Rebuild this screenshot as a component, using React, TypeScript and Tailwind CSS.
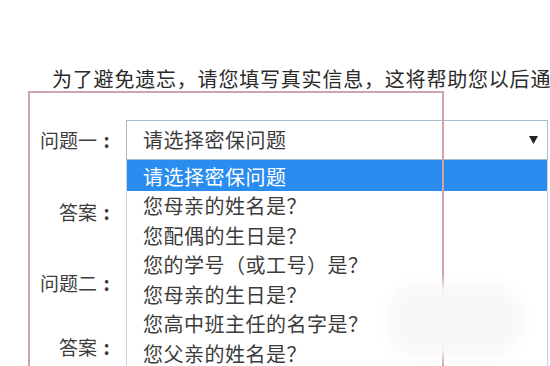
import React from 'react';

const OPTIONS: string[] = [
    '请选择密保问题',
    '您母亲的姓名是？',
    '您配偶的生日是？',
    '您的学号（或工号）是？',
    '您母亲的生日是？',
    '您高中班主任的名字是？',
    '您父亲的姓名是？',
    '您父亲的生日是？',
];

const FONT = "font-['Noto_Sans_CJK_SC','Noto_Sans',sans-serif]";

const Label: React.FC<{ text: string }> = ({ text }) => (
    <div className="flex w-[116px] shrink-0 justify-end text-[19px] leading-[40px] text-[#3c3c3c]">
        <span>{text}</span>
        <span className="inline-block w-[19px] text-center font-bold">:</span>
    </div>
);

const App: React.FC = () => {
    return (
        <div className={`relative w-[550px] h-[366px] overflow-hidden bg-white ${FONT}`}>
            <p className="pt-[65px] pl-[52px] whitespace-nowrap text-[20px] leading-[28px] tracking-[0.8px] text-[#2a2a2a]">
                为了避免遗忘，请您填写真实信息，这将帮助您以后通过密保问题找回密码。
            </p>

            <div className="mt-[27px] flex flex-col">
                {/* 问题一 + open select */}
                <div className="flex items-start gap-[10px]">
                    <Label text="问题一" />
                    <div className="relative z-10 w-[422px]">
                        <div className="flex h-[40px] items-center justify-between border border-[#a9bccb] bg-white pl-[16px] pr-[9px]">
                            <span className="text-[20px] tracking-[0.5px] text-[#3c3c3c]">请选择密保问题</span>
                            <svg width="9" height="8" viewBox="0 0 9 8" className="mb-[1px]">
                                <path d="M0 0 H9 L4.5 8 Z" fill="#222" />
                            </svg>
                        </div>
                        <ul className="absolute left-0 top-full w-full border-x border-[#c9d3dc] bg-white">
                            {OPTIONS.map((opt, i) => (
                                <li
                                    key={opt}
                                    className={
                                        i === 0
                                            ? 'h-[31px] bg-[#2b8cf0] pl-[16px] pt-[1px] text-[20px] leading-[31px] tracking-[0.5px] text-white'
                                            : 'h-[29.5px] pl-[16px] text-[20px] leading-[29.5px] tracking-[0.5px] text-[#3c3c3c]'
                                    }
                                >
                                    {opt}
                                </li>
                            ))}
                        </ul>
                    </div>
                </div>

                <div className="mt-[32px] flex">
                    <Label text="答案" />
                </div>
                <div className="mt-[31px] flex">
                    <Label text="问题二" />
                </div>
                <div className="mt-[24px] flex">
                    <Label text="答案" />
                </div>
            </div>

            {/* annotation frame drawn over the screenshot */}
            <div className="pointer-events-none absolute left-[28px] top-[91px] z-20 h-[320px] w-[416px] border-2 border-[#cfa3ab]" />

            {/* smudged watermark */}
            <div className="pointer-events-none absolute left-[385px] top-[283px] z-30 h-[74px] w-[140px] rounded-full bg-[#f9f8f8] blur-[6px]" />
        </div>
    );
};

export default App;
